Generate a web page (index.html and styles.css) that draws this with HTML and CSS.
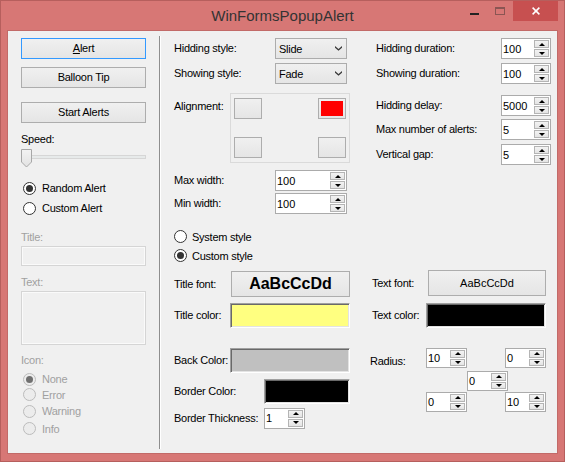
FILE: index.html
```html
<!DOCTYPE html>
<html>
<head>
<meta charset="utf-8">
<title>WinFormsPopupAlert</title>
<link rel="stylesheet" href="styles.css">
</head>
<body>
<div class="window">
  <div class="titlebar">
    <div></div>
    <div class="title">WinFormsPopupAlert</div>
    <div class="caps">
      <div class="cap cap-min"><span class="dash"></span></div>
      <div class="cap cap-max"><span class="maxbox"></span></div>
      <div class="cap cap-close"><svg width="8" height="8" viewBox="0 0 8 8"><path d="M0.6 0.6 L7.4 7.4 M7.4 0.6 L0.6 7.4" stroke="#fff" stroke-width="1.5" fill="none"/></svg></div>
    </div>
  </div>
  <div class="client">
    <div class="left">
      <div class="btn btn-focus m-alert"><span><u>A</u>lert</span></div>
      <div class="btn m-balloon">Balloon Tip</div>
      <div class="btn m-start">Start Alerts</div>
      <div class="lbl m-speed">Speed:</div>
      <div class="slider">
        <div class="track"></div>
        <svg class="thumb" width="11" height="19" viewBox="0 0 11 19">
          <defs><linearGradient id="tg" x1="0" y1="0" x2="0" y2="1"><stop offset="0" stop-color="#F3F3F3"/><stop offset="1" stop-color="#E2E2E2"/></linearGradient></defs>
          <path d="M0.5 0.5 H10.5 V13 L5.5 18 L0.5 13 Z" fill="url(#tg)" stroke="#A8A8A8"/>
        </svg>
      </div>
      <div class="radio m-random"><span class="dot on"></span>Random Alert</div>
      <div class="radio"><span class="dot"></span>Custom Alert</div>
      <div class="lbl dis m-title">Title:</div>
      <div class="tbox m-tb1"></div>
      <div class="lbl dis m-text">Text:</div>
      <div class="tbox tb-text m-tb2"></div>
      <div class="lbl dis m-icon">Icon:</div>
      <div class="radio dis ri-none"><span class="dot on"></span>None</div>
      <div class="radio dis ri-error"><span class="dot"></span>Error</div>
      <div class="radio dis ri-warn"><span class="dot"></span>Warning</div>
      <div class="radio dis ri-info"><span class="dot"></span>Info</div>
    </div>
    <div class="sep"></div>
    <div class="main">
      <div class="top">
        <div class="mcol">
          <div class="row h21 mt7"><span class="lbl w101">Hidding style:</span><div class="combo"><span>Slide</span><svg class="chev" width="7" height="5" viewBox="0 0 7 5"><path d="M0 0 L3.5 3 L7 0 L7 1.8 L3.5 4.8 L0 1.8 Z" fill="#3A3A3A"/></svg></div></div>
          <div class="row h21 mt4"><span class="lbl w101">Showing style:</span><div class="combo"><span>Fade</span><svg class="chev" width="7" height="5" viewBox="0 0 7 5"><path d="M0 0 L3.5 3 L7 0 L7 1.8 L3.5 4.8 L0 1.8 Z" fill="#3A3A3A"/></svg></div></div>
          <div class="row arow mt9"><span class="lbl w56 alabel">Alignment:</span>
            <div class="apanel">
              <div class="abtn"></div>
              <div class="abtn"><span class="red"></span></div>
              <div class="abtn"></div>
              <div class="abtn"></div>
            </div>
          </div>
          <div class="row h21 mt7"><span class="lbl w101">Max width:</span><div class="num w72"><span class="v">100</span><span class="spin"><i class="up"></i><i class="dn"></i></span></div></div>
          <div class="row h21 mt2"><span class="lbl w101">Min width:</span><div class="num w72"><span class="v">100</span><span class="spin"><i class="up"></i><i class="dn"></i></span></div></div>
        </div>
        <div class="rcol">
          <div class="row h21 mt7"><span class="lbl w125">Hidding duration:</span><div class="num w50"><span class="v">100</span><span class="spin"><i class="up"></i><i class="dn"></i></span></div></div>
          <div class="row h21 mt4"><span class="lbl w125">Showing duration:</span><div class="num w50"><span class="v">100</span><span class="spin"><i class="up"></i><i class="dn"></i></span></div></div>
          <div class="row h21 mt11"><span class="lbl w125">Hidding delay:</span><div class="num w50"><span class="v">5000</span><span class="spin"><i class="up"></i><i class="dn"></i></span></div></div>
          <div class="row h21 mt3"><span class="lbl w125">Max number of alerts:</span><div class="num w50"><span class="v">5</span><span class="spin"><i class="up"></i><i class="dn"></i></span></div></div>
          <div class="row h21 mt4"><span class="lbl w125">Vertical gap:</span><div class="num w50"><span class="v">5</span><span class="spin"><i class="up"></i><i class="dn"></i></span></div></div>
        </div>
      </div>
      <div class="bottom">
        <div class="mcol2">
          <div class="radio r-mid mt13"><span class="dot"></span>System style</div>
          <div class="radio r-mid"><span class="dot on"></span>Custom style</div>
          <div class="row h26 mt6"><span class="lbl w57">Title font:</span><div class="fbtn fbtn-bold w119">AaBcCcDd</div></div>
          <div class="row h25 mt6"><span class="lbl w56">Title color:</span><div class="cbox c-yellow w120"></div></div>
          <div class="row h25 mt20"><span class="lbl w56">Back Color:</span><div class="cbox c-silver w120"></div></div>
          <div class="row h25 mt6"><span class="lbl w90">Border Color:</span><div class="cbox c-black w86"></div></div>
          <div class="row h20 mt4"><span class="lbl w90">Border Thickness:</span><div class="num w41"><span class="v">1</span><span class="spin"><i class="up"></i><i class="dn"></i></span></div></div>
        </div>
        <div class="rcol2">
          <div class="row h26 mt56"><span class="lbl w58 pl2">Text font:</span><div class="fbtn w118">AaBcCcDd</div></div>
          <div class="row h25 mt7"><span class="lbl w56 pl2">Text color:</span><div class="cbox c-black w120"></div></div>
          <div class="radius mt20">
            <span class="lbl w56 rlabel">Radius:</span>
            <div class="rgrid">
              <div class="rrow"><div class="num w41 h20"><span class="v">10</span><span class="spin"><i class="up"></i><i class="dn"></i></span></div><div class="num w41 h20"><span class="v">0</span><span class="spin"><i class="up"></i><i class="dn"></i></span></div></div>
              <div class="rrow rmid"><div class="num w41 h20"><span class="v">0</span><span class="spin"><i class="up"></i><i class="dn"></i></span></div></div>
              <div class="rrow rlast"><div class="num w41 h20"><span class="v">0</span><span class="spin"><i class="up"></i><i class="dn"></i></span></div><div class="num w41 h20"><span class="v">10</span><span class="spin"><i class="up"></i><i class="dn"></i></span></div></div>
            </div>
          </div>
        </div>
      </div>
    </div>
  </div>
</div>
</body>
</html>
```
FILE: styles.css
```css
* { box-sizing: border-box; }
html, body { margin: 0; padding: 0; }
body {
  width: 565px; height: 462px; overflow: hidden;
  font-family: "Liberation Sans", Arial, sans-serif;
  font-size: 11px; color: #000; letter-spacing: -0.25px;
}
.window {
  width: 565px; height: 462px;
  background: #D77775;
  border: 1px solid #B65F5D;
  padding: 0 6px 7px 6px;
  display: flex; flex-direction: column;
}
.titlebar { height: 29px; display: grid; grid-template-columns: 1fr auto 1fr; flex: none; }
.title { font-size: 15px; line-height: 29px; color: #333; letter-spacing: 0; white-space: nowrap; }
.caps { display: flex; justify-self: end; align-self: start; height: 20px; }
.cap { height: 20px; display: flex; justify-content: center; }
.cap-min, .cap-max { width: 26px; }
.cap-close { width: 45px; background: #C75050; align-items: center; }
.dash { width: 9px; height: 2px; background: #222; margin-top: 12px; }
.maxbox { width: 10px; height: 8px; border: 1px solid #8A5553; border-top-width: 2px; margin-top: 6px; }

.client { flex: 1; background: #F0F0F0; border: 1px solid #C26A68; display: flex; }

.left { width: 151px; padding-left: 13px; display: flex; flex-direction: column; flex: none; }
.left > * { width: 125px; flex: none; }
.btn {
  height: 21px; border: 1px solid #ADADAD;
  background: linear-gradient(#F0F0F0, #E5E5E5);
  display: flex; align-items: center; justify-content: center; line-height: 13px;
}
.btn-focus { border-color: #3399FF; }
.m-alert { margin-top: 7px; }
.m-balloon { margin-top: 8px; }
.m-start { margin-top: 14px; }
.lbl { line-height: 13px; white-space: nowrap; flex: none; }
.m-speed { margin-top: 10px; height: 13px; }
.slider { position: relative; height: 20px; margin-top: 1px; }
.track { margin: 8px 0 0 5px; height: 4px; background: #E7EAEA; border: 1px solid #D6D6D6; }
.thumb { position: absolute; left: 0; top: 2px; }

.radio { height: 20px; display: flex; align-items: center; white-space: nowrap; }
.dot {
  width: 13px; height: 13px; border-radius: 50%;
  border: 1px solid #333; background: #fff;
  margin: 0 6px 0 2px; flex: none;
  display: flex; align-items: center; justify-content: center;
}
.dot.on::after { content: ""; width: 7px; height: 7px; border-radius: 50%; background: #333; }
.m-random { margin-top: 11px; }
.dis { color: #A0A0A0; }
.radio.dis .dot { border-color: #BCBCBC; background: #ECECEC; }
.radio.dis .dot.on::after { background: #707070; }
.m-title { margin-top: 13px; height: 13px; }
.tbox { height: 20px; border: 1px solid #D5D5D5; box-shadow: inset 0 0 0 1px #FAFAFA; background: #F0F0F0; }
.m-tb1 { margin-top: 2px; }
.m-text { margin-top: 10px; height: 13px; }
.m-tb2 { margin-top: 2px; height: 54px; }
.m-icon { margin-top: 9px; height: 13px; }
.ri-none { margin-top: 4px; height: 16px; }
.ri-error { height: 15px; }
.ri-warn { height: 18px; }
.ri-info { height: 17px; }

.sep { width: 2px; margin: 5px 0 4px 0; border-left: 1px solid #8E8E8E; border-right: 1px solid #FFFFFF; flex: none; }

.main { flex: 1; padding-left: 13px; display: flex; flex-direction: column; }
.top { display: flex; gap: 26px; }
.mcol { width: 176px; display: flex; flex-direction: column; }
.rcol { width: 175px; display: flex; flex-direction: column; }
.bottom { display: flex; gap: 20px; }
.mcol2 { width: 176px; display: flex; flex-direction: column; }
.rcol2 { width: 176px; display: flex; flex-direction: column; }

.row { display: flex; align-items: center; }
.h20 { height: 20px; }
.h21 { height: 21px; }
.h25 { height: 25px; }
.h26 { height: 26px; }
.mt2 { margin-top: 2px; } .mt3 { margin-top: 3px; } .mt4 { margin-top: 4px; }
.mt6 { margin-top: 6px; } .mt7 { margin-top: 7px; } .mt9 { margin-top: 9px; }
.mt11 { margin-top: 11px; } .mt13 { margin-top: 13px; } .mt20 { margin-top: 20px; }
.mt56 { margin-top: 56px; }
.w41 { width: 41px; } .w50 { width: 50px; } .w56 { width: 56px; } .w57 { width: 57px; }
.w58 { width: 58px; } .w72 { width: 72px; } .w86 { width: 86px; } .w90 { width: 90px; }
.w101 { width: 101px; } .w118 { width: 118px; } .w119 { width: 119px; } .w120 { width: 120px; }
.w125 { width: 125px; }
.pl2 { padding-left: 2px; }

.combo {
  width: 72px; height: 21px; border: 1px solid #ACACAC;
  background: linear-gradient(#F0F0F0, #E5E5E5);
  display: flex; align-items: center; justify-content: space-between;
  padding: 0 4px 0 3px;
}
.chev { flex: none; }

.arow { align-items: flex-start; }
.alabel { padding-top: 7px; }
.apanel {
  width: 120px; height: 70px; border: 1px solid #DADADA;
  padding: 4px 3px;
  display: grid; grid-template-columns: 28px 28px; grid-template-rows: 21px 21px;
  justify-content: space-between; align-content: space-between;
}
.abtn { border: 1px solid #ADADAD; background: linear-gradient(#F0F0F0, #E5E5E5); padding: 2px; display: flex; }
.red { flex: 1; background: #FF0000; }

.num {
  height: 21px; border: 1px solid #ABABAB; background: #fff;
  display: flex; flex: none;
}
.num.h20 { height: 20px; }
.num .v { flex: 1; padding-left: 1px; display: flex; align-items: center; letter-spacing: 0; }
.spin { width: 15px; margin: 1px 1px 1px 0; display: flex; flex-direction: column; gap: 1px; flex: none; }
.spin i {
  flex: 1; border: 1px solid #B4B4B4;
  background: linear-gradient(#F3F3F3, #E4E4E4);
  display: flex; align-items: center; justify-content: center;
}
.spin i.up::before { content: ""; border-left: 3px solid transparent; border-right: 3px solid transparent; border-bottom: 3px solid #000; }
.spin i.dn::before { content: ""; border-left: 3px solid transparent; border-right: 3px solid transparent; border-top: 3px solid #000; }

.radio.r-mid { height: 19px; }
.radio.r-mid .dot { margin: 0 5px 0 0; }

.fbtn {
  height: 26px; border: 1px solid #ADADAD;
  background: linear-gradient(#F0F0F0, #E5E5E5);
  display: flex; align-items: center; justify-content: center; letter-spacing: 0;
}
.fbtn-bold { font-weight: bold; font-size: 16px; }
.cbox {
  height: 25px; border-style: solid; border-width: 1px;
  border-color: #A0A0A0 #FFFFFF #FFFFFF #A0A0A0;
  box-shadow: inset 1px 1px #696969, inset -1px -1px #E3E3E3;
}
.c-yellow { background: #FFFF80; }
.c-silver { background: #C0C0C0; }
.c-black { background: #000; }

.radius { display: flex; align-items: flex-start; }
.rlabel { padding-top: 7px; }
.rgrid { width: 120px; display: flex; flex-direction: column; }
.rrow { display: flex; justify-content: space-between; }
.rmid { margin-top: 3px; padding-left: 41px; justify-content: flex-start; }
.rlast { margin-top: 1px; }
```
